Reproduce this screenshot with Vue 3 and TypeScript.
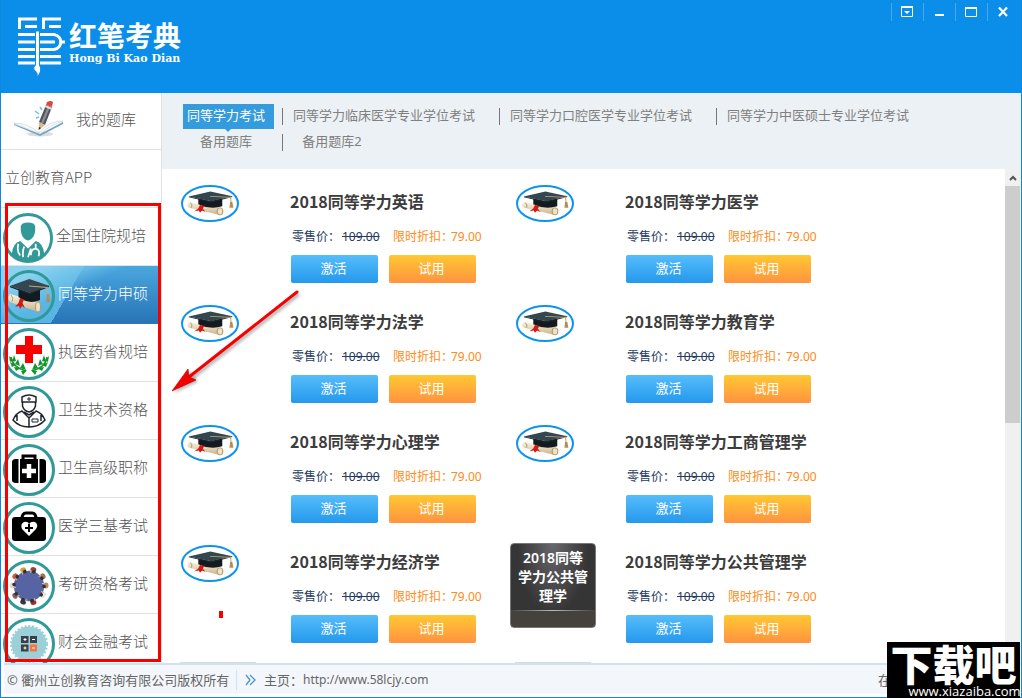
<script setup lang="ts">
import { ref } from 'vue'

interface Category {
  label: string
  icon: string
}

interface Course {
  title: string
  cover?: string
}

const categories: Category[] = [
  { label: '全国住院规培', icon: 'doctor' },
  { label: '同等学力申硕', icon: 'cap' },
  { label: '执医药省规培', icon: 'cross' },
  { label: '卫生技术资格', icon: 'nurse' },
  { label: '卫生高级职称', icon: 'case' },
  { label: '医学三基考试', icon: 'heart' },
  { label: '考研资格考试', icon: 'round' },
  { label: '财会金融考试', icon: 'calc' },
]

const tabRows = [
  [
    { label: '同等学力考试', wide: false },
    { label: '同等学力临床医学专业学位考试', wide: true },
    { label: '同等学力口腔医学专业学位考试', wide: true },
    { label: '同等学力中医硕士专业学位考试', wide: true },
  ],
  [
    { label: '备用题库', wide: false },
    { label: '备用题库2', wide: false },
  ],
]

const courses: Course[] = [
  { title: '2018同等学力英语' },
  { title: '2018同等学力医学' },
  { title: '2018同等学力法学' },
  { title: '2018同等学力教育学' },
  { title: '2018同等学力心理学' },
  { title: '2018同等学力工商管理学' },
  { title: '2018同等学力经济学' },
  { title: '2018同等学力公共管理学', cover: '2018同等学力公共管理学' },
]

const activeCategory = ref('同等学力申硕')
const activeTab = ref('同等学力考试')
const people = [15, 55, 88, 122, 165, 200, 235, 272, 305, 340]
const skins = ['#8a4a35', '#9a7a50', '#b08a60', '#e8e4e4', '#a03030', '#3c3840', '#806070', '#e0dada', '#c06048', '#d0a040']
</script>

<template>
  <div class="window">
    <svg class="defs" aria-hidden="true">
      <defs>
        <linearGradient id="paper" x1="0" y1="0" x2="0" y2="1">
          <stop offset="0" stop-color="#fbf3dc" />
          <stop offset="1" stop-color="#c9b48c" />
        </linearGradient>
        <filter id="soft" x="-20%" y="-20%" width="140%" height="140%">
          <feGaussianBlur stdDeviation="1.5" />
        </filter>
        <symbol id="cap" viewBox="0 0 52 52" preserveAspectRatio="none">
          <path d="M7 24 L36 32 L35 42 L7 32 Q4 28 7 24Z" fill="url(#paper)" />
          <path d="M8 25 Q11 28 9 32" fill="none" stroke="#b8a076" />
          <ellipse cx="35" cy="37" rx="2.500" ry="5" fill="#efe2c2" stroke="#b09870" />
          <path d="M15.500 19 V27 Q26 35 37 30 V19 L26 23Z" fill="#141b20" />
          <path d="M26.300 9 L46 15.800 L27 23 L7 16Z" fill="#34464e" />
          <path d="M7 16 L27 23 L46 15.800 V17 L27 24.500 L7 17.200Z" fill="#1c272d" />
          <path d="M26 16 L44.500 17.500 L45 27" fill="none" stroke="#c8a878" />
          <path d="M44 24 H46 L47 32 H43.500Z" fill="#b88b50" />
          <path d="M17 28 L21 29.500 L19.500 33 L22 38 L19 36 L17 39 L16 36 L12 37 L15.500 33Z" fill="#d01818" />
        </symbol>
      </defs>
    </svg>

    <header class="header">
      <div class="brand">
        <svg class="brand-mark" viewBox="0 0 48 60" aria-hidden="true">
          <g fill="none" stroke="#fff" stroke-width="3">
            <path d="M2.500 12 V2 H20 M8 9.500 H20 M26.500 12 V2 H44 M32 9.500 H44" />
            <path d="M1 17.500 H37 C46 19 46 31 37 32.500 H23 M1 25 H18 M23 25 H38 M1 32.500 H18 M1 39.500 H44 M1 46 H44" />
            <path d="M44 25 H48" />
          </g>
          <path d="M18.500 14 H22.500 V48 Q26 54 20 60 Q21 55 17 53 Q16 50 18.500 48Z" fill="#fff" stroke="#0a8ee9" />
        </svg>
        <div class="brand-text">
          <span class="brand-name">红笔考典</span>
          <span class="brand-latin">Hong Bi Kao Dian</span>
        </div>
      </div>
      <div class="controls">
        <button type="button" aria-label="菜单">
          <svg viewBox="0 0 12 12"><path d="M.500 1 H11.500 V10.500 H.500Z" fill="none" stroke="#fff" /><path d="M0 0 H12 V2 H0Z M3 5 H9 L6 8Z" fill="#fff" /></svg>
        </button>
        <button type="button" aria-label="最小化">
          <svg viewBox="0 0 12 12"><path d="M2 8 H11 V10 H2Z" fill="#fff" /></svg>
        </button>
        <button type="button" aria-label="最大化">
          <svg viewBox="0 0 12 12"><path d="M.500 2 H11.500 V10.500 H.500Z" fill="none" stroke="#fff" /><path d="M0 1 H12 V3 H0Z" fill="#fff" /></svg>
        </button>
        <button type="button" aria-label="关闭">
          <svg viewBox="0 0 12 12"><path d="M2 1.500 L10 10 M10 1.500 L2 10" stroke="#fff" stroke-width="2.200" /></svg>
        </button>
      </div>
    </header>

    <div class="body">
      <nav class="sidebar">
        <button type="button" class="mine">
          <svg viewBox="0 0 52 36" aria-hidden="true">
            <ellipse cx="27" cy="33" rx="13" ry="2.500" fill="#ddd" />
            <path d="M1 23 L25 32 L27 33 L50 21 V23 L27 35 L1 24Z" fill="#6fa6c2" />
            <path d="M1 22 Q15 22 26 32 Q35 20 50 20 Q36 25 27 33 Q14 28 1 22Z" fill="#f8f9fa" stroke="#b9c6ce" stroke-width=".500" />
            <path d="M33 4 L39 6 L32 24 L26 21Z" fill="#50555b" />
            <path d="M35 5 L37 6 L30 23 L28 22Z" fill="#8b9096" />
            <path d="M26 21 L32 24 L26 29Z" fill="#e1b68a" />
            <path d="M26 26 L28 27 L25.500 29Z" fill="#222" />
            <path d="M34 1 Q38 -1 40 1 L39 6 L33 4Z" fill="#d94a3d" />
            <path d="M32 5 L39 8" stroke="#ddd" stroke-width="2" />
            <path d="M27 6 L29 9 M22 10 L26 13 M23 17 L26 16" stroke="#7dbbe0" stroke-width="1.500" />
          </svg>
          <span>我的题库</span>
        </button>
        <button type="button" class="app-link">立创教育APP</button>
        <button
          v-for="item in categories"
          :key="item.label"
          type="button"
          class="category"
          :class="{ active: item.label === activeCategory }"
          @click="activeCategory = item.label"
        >
          <svg class="category-icon" :class="{ small: item.icon === 'doctor' }" viewBox="0 0 52 52" aria-hidden="true">
            <circle v-if="item.icon !== 'cap'" cx="26" cy="26" r="24.500" fill="#fff" />
            <g v-if="item.icon === 'doctor'" fill="#329999">
              <path d="M18.500 14 Q19 10 26 10 Q33 10 33.500 14 Q34 22 30.500 26 Q26 31 21.500 26 Q18 22 18.500 14Z" />
              <path d="M18 29 L26 37 L34 29 Q42 31 43 43 Q36 51 26 51 Q16 51 9 43 Q10 31 18 29Z" />
              <path d="M16 32 Q14 40 18 44 M22 35 Q20 40 21 46 M34 32 V37 M29 44 Q29 37 34 37 Q39 38 37 45 M29 37 L26 46" fill="none" stroke="#fff" stroke-width="1.800" />
            </g>
            <use v-else-if="item.icon === 'cap'" href="#cap" width="52" height="52" />
            <g v-else-if="item.icon === 'cross'">
              <path d="M22 8 H30 V17 H39 V26 H30 V35 H22 V26 H13 V17 H22Z" fill="#f80000" />
              <path d="M8 29 Q9 39 23 43 M44 29 Q43 39 29 43" fill="none" stroke="#11962b" stroke-width="1.500" />
              <g fill="#11962b">
                <path d="M6 28 L10 32 L7 34Z M11 27 L13 33 L9 34Z M7 34 L13 37 L9 39Z M15 31 L17 38 L12 36Z M11 39 L18 40 L13 43Z M20 35 L23 42 L17 40Z M18 43 L24 42 L20 47Z" />
                <path d="M46 28 L42 32 L45 34Z M41 27 L39 33 L43 34Z M45 34 L39 37 L43 39Z M37 31 L35 38 L40 36Z M41 39 L34 40 L39 43Z M32 35 L29 42 L35 40Z M34 43 L28 42 L32 47Z" />
              </g>
            </g>
            <g v-else-if="item.icon === 'nurse'" fill="none" stroke="#20242c" stroke-width="1.500">
              <path d="M19 11 Q26 7 33 11 V16 H19Z M19.500 16 V20 Q21 25 26 26 Q31 25 32.500 20 V16" />
              <path d="M26 11 V15 M24 13 H28" stroke-width="1" />
              <path d="M19 25 L26 32 L33 25 Q39 27 42 34 Q36 41 26 41 Q16 41 10 34 Q13 27 19 25Z M21 26 L26 29 L31 26 M26 32 V41 M14 29 V35 M38 29 V35" />
              <path d="M29 33 H35 V36 H29Z" stroke-width="1" />
            </g>
            <g v-else-if="item.icon === 'case'">
              <path d="M20 15 V12 H32 V15" fill="none" stroke="#000" stroke-width="3" />
              <path d="M17 15 H35 V39 H17Z M13 15 H15.500 V39 H13 Q9 39 9 36 V18 Q9 15 13 15Z M36.500 15 H39 Q43 15 43 18 V36 Q43 39 39 39 H36.500Z" fill="#000" />
              <path d="M26 20 V34 M19 27 H33" stroke="#fff" stroke-width="4.500" />
            </g>
            <g v-else-if="item.icon === 'heart'">
              <path d="M19 17 Q19 11 23 11 H29 Q33 11 33 17" fill="none" stroke="#000" stroke-width="3" />
              <rect x="9" y="15" width="34" height="24" rx="3" fill="#000" />
              <path d="M26 34 L19 27 Q17 22 21 20 Q25 19 26 22 Q28 19 32 20 Q36 23 33 27Z" fill="#fff" />
              <path d="M26 22 V30 M22 26 H30" stroke="#000" stroke-width="2" />
            </g>
            <g v-else-if="item.icon === 'round'">
              <circle cx="26" cy="26" r="15" fill="#5664a3" stroke="#5b6178" stroke-width=".500" />
              <g v-for="(angle, index) in people" :key="angle" :transform="`rotate(${angle} 26 26)`">
                <ellipse cx="26" cy="9" rx="3" ry="2.500" :fill="skins[index]" />
                <circle cx="27" cy="11" r="1.800" fill="#3b2d2c" />
                <path d="M24 10 V13" stroke="#c8b4aa" />
              </g>
            </g>
            <g v-else>
              <circle cx="26" cy="26" r="17.500" fill="#9bd0d9" />
              <circle cx="26" cy="26" r="18" fill="none" stroke="#9bd0d9" stroke-width="2" stroke-dasharray="2 1.800" />
              <path d="M18 18 H25.500 V25 H18Z M27 18 H34 V25 H27Z M18 26.500 H25.500 V33.500 H18Z" fill="#3c3f47" />
              <path d="M27 26.500 H34 V33.500 H27Z" fill="#f3753f" />
              <path d="M20.500 21.500 H23.500 M22 20 V23 M29 21.500 H32 M20.500 30 H23.500 M22 28.500 V31.500 M29 30 H32" stroke="#fff" />
            </g>
            <circle cx="26" cy="26" r="24.500" fill="none" stroke="#329999" stroke-width="3" />
          </svg>
          <span>{{ item.label }}</span>
        </button>
      </nav>

      <main class="main">
        <nav class="tabs">
          <ul v-for="(row, index) in tabRows" :key="index">
            <li v-for="tab in row" :key="tab.label" :class="{ wide: tab.wide }">
              <button type="button" :class="{ active: tab.label === activeTab }" @click="activeTab = tab.label">{{ tab.label }}</button>
            </li>
          </ul>
        </nav>

        <div class="content">
          <div class="course-list">
            <article v-for="course in courses" :key="course.title" class="course">
              <div class="thumb">
                <div v-if="course.cover" class="cover">{{ course.cover }}</div>
                <svg v-else class="oval" viewBox="0 0 58 37" aria-hidden="true">
                  <ellipse cx="29" cy="18.500" rx="28" ry="17.500" fill="#fff" stroke="#0d93ee" stroke-width="2" />
                  <use href="#cap" width="58" height="37" />
                </svg>
              </div>
              <div class="info">
                <h2>{{ course.title }}</h2>
                <p><span class="retail">零售价：</span><del>109.00</del><span class="sale-label">限时折扣：</span><span class="sale">79.00</span></p>
                <div class="actions">
                  <button type="button" class="activate">激活</button>
                  <button type="button" class="trial">试用</button>
                </div>
              </div>
            </article>
            <div class="next-cover"></div>
            <div class="next-cover"></div>
          </div>
          <div class="scrollbar">
            <button type="button" aria-label="向上滚动">
              <svg viewBox="0 0 8 6"><path d="M1 5 L4 2 L7 5" fill="none" stroke="#555" stroke-width="2" /></svg>
            </button>
            <div class="scroll-thumb"></div>
          </div>
        </div>
      </main>
    </div>

    <footer class="footer">
      <span class="copyright">© 衢州立创教育咨询有限公司版权所有</span>
      <svg class="chevrons" viewBox="0 0 11 12" aria-hidden="true"><path d="M1 1 L5 6 L1 11 M5 1 L10 6 L5 11" fill="none" stroke="#4a94cc" stroke-width="1.300" /></svg>
      <span class="home">主页：</span>
      <a href="http://www.58lcjy.com">http://www.58lcjy.com</a>
      <span class="status">在</span>
    </footer>

    <svg class="annotations" width="310" height="670" viewBox="0 0 310 670" aria-hidden="true">
      <rect x="6.500" y="204.500" width="153" height="456" fill="none" stroke="#f80000" stroke-width="3" />
      <path d="M299 294 L191 379" stroke="#777" stroke-opacity=".6" stroke-width="3" filter="url(#soft)" />
      <path d="M174 393 L190 371 L198 382Z" fill="#777" fill-opacity=".5" filter="url(#soft)" />
      <path d="M297 292 L189 377" stroke="#f80000" stroke-width="3" stroke-linecap="round" />
      <path d="M172 391 L188 369 L189 377 L196 380Z" fill="#f80000" stroke="#a00" stroke-width=".600" />
      <path d="M219 611 H223 V618 H219Z" fill="#f80000" />
    </svg>

    <div class="watermark">
      <strong>下载吧</strong>
      <span>www.xiazaiba.com</span>
    </div>
  </div>
</template>

<style>
html,
body {
  margin: 0;
  overflow: hidden;
}
</style>

<style scoped>
.window {
  position: relative;
  display: grid;
  grid-template-rows: 93px minmax(0, 1fr) auto;
  box-sizing: border-box;
  height: 100vh;
  background: #fff;
  border: 1px solid #0d88dd;
  border-top: 0;
  font-family: "Noto Sans", "Noto Sans CJK SC", sans-serif;
  color: #555;
}

button {
  margin: 0;
  padding: 0;
  border: 0;
  background: none;
  color: inherit;
  font: inherit;
}

.defs {
  position: absolute;
  width: 0;
  height: 0;
}

.header {
  display: flex;
  justify-content: space-between;
  align-items: flex-start;
  background: #0a8ee9;
  color: #fff;
}

.brand {
  display: flex;
  gap: 4px;
  padding: 17px 0 0 16px;
}

.brand-mark {
  width: 48px;
  height: 60px;
}

.brand-text {
  display: flex;
  flex-direction: column;
  padding-top: 1px;
}

.brand-name {
  font: 700 28px/34px "Noto Sans CJK SC", sans-serif;
}

.brand-latin {
  font: bold 11px/13px "DejaVu Serif", serif;
}

.controls {
  display: flex;
  padding: 3px 2px 0 0;
}

.controls button {
  display: flex;
  justify-content: center;
  align-items: center;
  box-sizing: border-box;
  width: 32px;
  height: 18px;
  padding-right: 2px;
  border-left: 1px solid #48a9ef;
}

.controls svg {
  width: 12px;
  height: 12px;
}

.body {
  display: grid;
  grid-template-columns: 161px minmax(0, 1fr);
  min-height: 0;
}

.sidebar {
  display: flex;
  flex-direction: column;
  box-sizing: border-box;
  overflow: hidden;
  border-right: 1px solid #e0e0e0;
  font-family: "Noto Sans CJK SC", sans-serif;
  font-size: 15px;
  font-weight: 300;
}

.sidebar button {
  display: flex;
  flex: none;
  align-items: center;
  box-sizing: border-box;
  height: 58px;
  border-bottom: 1px solid #e2e2e2;
  text-align: left;
  white-space: nowrap;
}

.sidebar .mine {
  gap: 11px;
  height: 57px;
  padding: 0 0 4px 12px;
}

.mine svg {
  width: 52px;
  height: 36px;
}

.mine span {
  padding-bottom: 2px;
}

.sidebar .app-link {
  padding: 0 0 4px 4px;
}

.sidebar .category {
  gap: 3px;
  padding: 3px 0 0 2px;
}

.category-icon {
  width: 52px;
  height: 52px;
}

.category-icon.small {
  width: 50px;
  height: 50px;
}

.category span {
  padding-bottom: 8px;
}

.sidebar .active {
  border-color: #2c78b4;
  color: #fff;
  background:
    linear-gradient(155deg, #8bd2f0 0 15%, transparent 45%),
    linear-gradient(120deg, #58b5e4 0 43%, transparent 43%),
    linear-gradient(#4aa7de, #2874b6);
}

.main {
  display: flex;
  flex-direction: column;
  min-height: 0;
}

.tabs {
  box-sizing: border-box;
  height: 76px;
  padding: 11px 0 0 21px;
  background: #ecf1f5;
  color: #808080;
  font-size: 13px;
}

.tabs ul {
  display: flex;
  margin: 0;
  padding: 0;
  list-style: none;
}

.tabs li {
  position: relative;
  box-sizing: border-box;
  width: 99px;
  height: 26px;
}

.tabs li + li {
  padding-left: 7px;
}

.tabs li + li::before {
  content: "";
  position: absolute;
  left: 0;
  top: 4px;
  width: 1px;
  height: 17px;
  background: #777;
}

.tabs .wide {
  width: 217px;
}

.tabs button {
  position: relative;
  width: 91px;
  height: 25px;
  padding: 0 9px 2px 4px;
  line-height: 23px;
  white-space: nowrap;
}

.tabs .wide button {
  width: auto;
}

.tabs .active {
  background: #349cdd;
  color: #fff;
}

.tabs .active::after {
  content: "";
  position: absolute;
  left: 42px;
  top: 25px;
  border: 3px solid transparent;
  border-top-color: #349cdd;
}

.content {
  display: flex;
  flex: 1;
  min-height: 0;
}

.course-list {
  display: grid;
  grid-template-columns: repeat(2, 335px);
  grid-auto-rows: 120px;
  flex: 1;
  align-content: start;
  overflow: hidden;
  padding: 13px 0 0 13px;
}

.course {
  display: flex;
}

.thumb {
  box-sizing: border-box;
  width: 115px;
}

.oval {
  display: block;
  width: 58px;
  height: 37px;
  margin: 3px 0 0 6px;
}

.cover {
  box-sizing: border-box;
  width: 86px;
  height: 85px;
  margin-top: 1px;
  padding: 4px 6px 0;
  border: 1px solid #777;
  border-radius: 4px;
  background:
    linear-gradient(90deg, #444, #bbb, #444) 0 66px / 100% 1px no-repeat,
    linear-gradient(transparent 0 67px, #45413d 67px),
    radial-gradient(ellipse at top, #68686c, #353536 60%);
  color: #fff;
  font-size: 14px;
  font-weight: 600;
  line-height: 19px;
  text-align: center;
}

.info h2 {
  margin: 6px 0 0;
  color: #3c3c3c;
  font-family: "Noto Sans CJK SC", sans-serif;
  font-size: 16px;
  font-weight: bold;
  line-height: 26px;
  white-space: nowrap;
}

.info p {
  display: flex;
  margin: 14px 0 9px 2px;
  font-size: 12px;
  line-height: 18px;
  white-space: nowrap;
}

.retail,
del {
  color: #263b5e;
}

.retail {
  width: 50px;
}

del {
  width: 51px;
}

.sale-label,
.sale {
  color: #ff8a16;
}

.sale-label {
  width: 58px;
}

.actions {
  display: flex;
  gap: 11px;
  padding-left: 1px;
}

.actions button {
  width: 87px;
  height: 28px;
  padding: 0 2px 4px 0;
  border-radius: 2px;
  color: #fff;
  font-size: 13px;
}

.activate {
  background: linear-gradient(#55bdfa, #2598ec);
}

.trial {
  background: linear-gradient(#ffc832, #ff9340);
}

.next-cover {
  width: 76px;
  height: 1px;
  margin-left: 5px;
  background: #d8dbd8;
}

.scrollbar {
  display: flex;
  flex-direction: column;
  width: 16px;
  background: #f0f0f0;
}

.scrollbar button {
  display: flex;
  justify-content: center;
  align-items: center;
  height: 17px;
}

.scrollbar svg {
  width: 8px;
  height: 6px;
}

.scroll-thumb {
  width: 15px;
  height: 48%;
  background: #cdcdcd;
}

.footer {
  display: flex;
  align-items: center;
  height: 29px;
  margin: 0 0 3px 3px;
  border-top: 2px solid #cfe2ef;
  background: #f3f7fb;
  color: #666;
  font-size: 13px;
  line-height: 20px;
  white-space: nowrap;
}

.copyright {
  box-sizing: border-box;
  width: 233px;
  padding-left: 3px;
  border-right: 1px solid #cfe2ef;
}

.chevrons {
  width: 11px;
  height: 12px;
  margin: 0 8px;
}

.home {
  width: 39px;
}

.footer a {
  color: #666;
  font-size: 12px;
  text-decoration: none;
}

.status {
  margin-left: auto;
  padding-right: 130px;
}

.annotations {
  position: absolute;
  top: 0;
  left: -1px;
  pointer-events: none;
}

.watermark {
  position: absolute;
  right: 1px;
  bottom: -1px;
  display: flex;
  flex-direction: column;
  align-items: center;
  width: 133px;
  background: #000;
  color: #fff;
}

.watermark strong {
  font: 900 42px/42px "Noto Sans CJK SC", sans-serif;
}

.watermark span {
  padding-left: 22px;
  font: 13px/14px "Open Sans", sans-serif;
}
</style>
